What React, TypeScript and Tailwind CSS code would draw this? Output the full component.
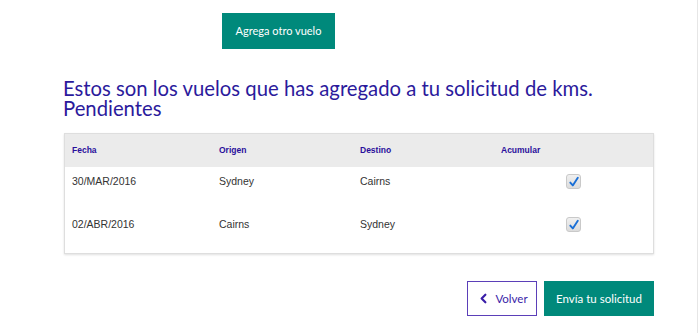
import { ChevronLeft } from "lucide-react"

const flights = [
  { fecha: "30/MAR/2016", origen: "Sydney", destino: "Cairns", acumular: true },
  { fecha: "02/ABR/2016", origen: "Cairns", destino: "Sydney", acumular: true },
]

function CheckBox({ checked }: { checked: boolean }) {
  return (
    <span className="flex h-[15px] w-[15px] items-center justify-center rounded-[3px] border border-[#c9c9c9] bg-gradient-to-b from-[#f0f0f0] to-[#dcdcdc]">
      {checked && (
        <svg viewBox="0 0 12 12" className="h-[12px] w-[12px]">
          <path d="M2.3 6.6 L4.8 9.4 L9.8 1.8" fill="none" stroke="#1a6fd6" strokeWidth="1.9" strokeLinecap="round" strokeLinejoin="round" />
        </svg>
      )}
    </span>
  )
}

export default function App() {
  return (
    <div className="h-[333px] w-[698px] border-r border-[#e6e6e6] bg-white font-['Lato',sans-serif]">
      <div className="pl-[222px] pt-[13px]">
        <button className="h-[36px] w-[113px] bg-[#00897b] text-[11px] text-white">Agrega otro vuelo</button>
      </div>

      <h2 className="mt-[29px] pl-[63px] pr-[90px] text-[20.3px] leading-[20px] text-[#2b1a9c]">
        Estos son los vuelos que has agregado a tu solicitud de kms. Pendientes
      </h2>

      <div className="ml-[64px] mt-[15px] h-[121px] w-[590px] border border-[#dedede] shadow-[0_1px_2px_rgba(0,0,0,0.12)] font-['Liberation_Sans',Arial,sans-serif]">
        <div className="grid h-[33px] grid-cols-[147px_141px_141px_1fr] items-center bg-[#ebebeb] text-[8.5px] font-bold text-[#2a0f9c]">
          <div className="pl-[7px]">Fecha</div>
          <div className="pl-[7px]">Origen</div>
          <div className="pl-[7px]">Destino</div>
          <div className="pl-[7px]">Acumular</div>
        </div>
        {flights.map((f) => (
          <div key={f.fecha} className="grid h-[43px] grid-cols-[147px_141px_141px_1fr] items-start pt-[7px] text-[10.5px] leading-[14px] text-[#333]">
            <div className="pl-[7px]">{f.fecha}</div>
            <div className="pl-[7px]">{f.origen}</div>
            <div className="pl-[7px]">{f.destino}</div>
            <div className="flex justify-center">
              <CheckBox checked={f.acumular} />
            </div>
          </div>
        ))}
      </div>

      <div className="mt-[27px] flex justify-end gap-[7px] pr-[43px]">
        <button className="flex h-[35px] w-[70px] items-center justify-center gap-[4px] border border-[#5b3fb8] text-[11.5px] text-[#3a1ea8]">
          <ChevronLeft className="h-[15px] w-[15px]" strokeWidth={3.5} />
          Volver
        </button>
        <button className="h-[35px] w-[110px] bg-[#00897b] text-[11.5px] text-white">Envía tu solicitud</button>
      </div>
    </div>
  )
}
